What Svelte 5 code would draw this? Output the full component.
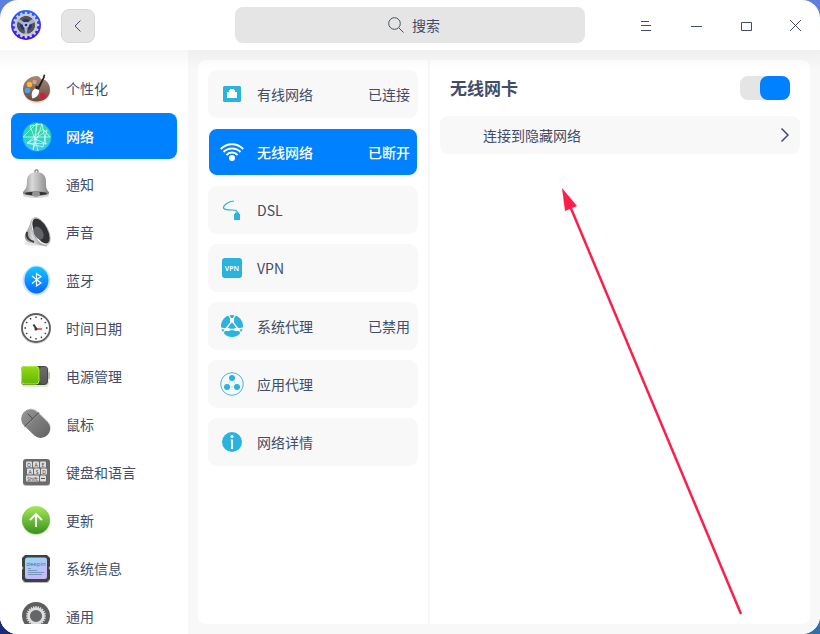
<script lang="ts">
	type Module = { id: string; label: string };
	type Network = { id: string; label: string; status?: string };

	const modules: Module[] = [
		{ id: 'palette', label: '个性化' },
		{ id: 'globe', label: '网络' },
		{ id: 'bell', label: '通知' },
		{ id: 'speaker', label: '声音' },
		{ id: 'bluetooth', label: '蓝牙' },
		{ id: 'clock', label: '时间日期' },
		{ id: 'battery', label: '电源管理' },
		{ id: 'mouse', label: '鼠标' },
		{ id: 'keyboard', label: '键盘和语言' },
		{ id: 'update', label: '更新' },
		{ id: 'chip', label: '系统信息' },
		{ id: 'gear', label: '通用' }
	];

	const networks: Network[] = [
		{ id: 'wired', label: '有线网络', status: '已连接' },
		{ id: 'wifi', label: '无线网络', status: '已断开' },
		{ id: 'dsl', label: 'DSL' },
		{ id: 'vpn', label: 'VPN' },
		{ id: 'proxy', label: '系统代理', status: '已禁用' },
		{ id: 'appproxy', label: '应用代理' },
		{ id: 'info', label: '网络详情' }
	];

	const hours = Array.from({ length: 12 }, (_, i) => i * 30);
	const teeth = Array.from({ length: 16 }, (_, i) => i * 22.5);
	const fineTeeth = Array.from({ length: 24 }, (_, i) => i * 15);
	const thirds = [0, 120, 240];

	let activeModule = $state('globe');
	let activeNetwork = $state('wifi');
	let wirelessOn = $state(true);
	let query = $state('');
</script>

{#snippet moduleIcon(id: string)}
	<svg class="module-icon" viewBox="0 0 32 32" aria-hidden="true">
		{#if id === 'palette'}
			<ellipse cx="17" cy="19" rx="13.5" ry="12.5" fill="#d8673c" opacity=".25" />
			<path d="M17 4C9 4 3 10 3 17c0 7 6 12.500 13.500 12.500C24 29.500 30 25 30 18c0-5-2-8-5-10-2-1.500-3 0-4-1-1-1.500-2-3-4-3z" fill="url(#wood)" />
			<circle cx="9.500" cy="12.500" r="2.700" fill="#f8b83a" />
			<circle cx="14.500" cy="10" r="2.200" fill="#cfa192" />
			<circle cx="7.500" cy="18.500" r="2.800" fill="#4aa3ee" />
			<circle cx="22.500" cy="23.500" r="2.700" fill="#e3123f" />
			<path d="M23.500 4.500l1.300.8L20 15.500l-2-1z" fill="#1c1c1c" />
			<path d="M22.800 5.200l1-3 1.600.8-1.200 3z" fill="#333" />
			<path d="M16 13.500l4 2-1.300 2.500-3.500-1.500z" fill="#2a2523" />
			<path d="M15 16.500l4 1.500c.5 4-2 7.500-6.500 8.500-1.500-3-1-8 2.500-10z" fill="#fff" />
		{:else if id === 'globe'}
			<circle cx="17" cy="17" r="15" fill="#34c7f7" opacity=".3" />
			<circle cx="17" cy="17" r="14" fill="url(#globe)" />
			<path d="M3 17L17 3l-4 27 9-26 4 20-19-1L23 9l7 8H3m7-11l5 13 12-9m-20 13l16 4 4-17M17 3l-2 16 3 12M7 23l8-4 12 5M22 4L10 6" fill="none" stroke="#eafff8" stroke-width=".8" opacity=".85" />
		{:else if id === 'bell'}
			<ellipse cx="16" cy="27.500" rx="13" ry="2.500" fill="#bbb" opacity=".6" />
			<circle cx="16.500" cy="3.500" r="1.600" fill="none" stroke="#777" stroke-width="1.200" />
			<path d="M16.500 4C23 4 26 8 26 13c0 6 0 8 3 11v1.500H3V24c3-3 4-5 4-11 0-5 3-9 9.500-9z" fill="url(#silver)" />
			<ellipse cx="16" cy="25.500" rx="13" ry="2.200" fill="#858585" />
			<ellipse cx="16" cy="25.500" rx="11" ry="1.700" fill="#333" />
			<ellipse cx="16" cy="26" rx="4" ry="2.800" fill="#929292" />
		{:else if id === 'speaker'}
			<ellipse cx="16" cy="27.500" rx="12" ry="2.500" fill="#bbb" opacity=".35" />
			<path d="M12 3L7 15c-4 4-2 10 2 11.500 3 1 9 2 18 4z" fill="url(#silver)" />
			<path d="M7 16c-1 5 2 8.500 7 10" fill="none" stroke="#3b3b3b" stroke-width="2" />
			<ellipse cx="20.500" cy="15.500" rx="7.500" ry="15.200" transform="rotate(-28 20.500 15.500)" fill="#f2f2f2" stroke="#a6a6a6" stroke-width=".8" />
			<ellipse cx="21" cy="15" rx="6.500" ry="13.800" transform="rotate(-28 21 15)" fill="#303235" />
			<ellipse cx="18.500" cy="17" rx="4.500" ry="7" transform="rotate(-28 18.500 17)" fill="#626467" />
		{:else if id === 'bluetooth'}
			<ellipse cx="16.500" cy="16.500" rx="14" ry="15" fill="#2996ff" opacity=".25" />
			<ellipse cx="16.500" cy="16" rx="12" ry="13.500" fill="url(#blue)" />
			<path d="M12 12l9 7-4.500 3V9.500l4.500 3-9 7" fill="none" stroke="#fff" stroke-width="1.200" />
		{:else if id === 'clock'}
			<circle cx="16" cy="17" r="15" fill="#777" opacity=".3" />
			<circle cx="16" cy="16" r="14" fill="#fcfcfc" stroke="#606060" stroke-width="1.800" />
			{#each hours as angle}
				<path d="M16 4.500v1.500" stroke="#333" stroke-width="1.300" transform="rotate({angle} 16 16)" />
			{/each}
			<path d="M13.500 12.500l2.500 4" stroke="#3b4143" stroke-width="2" />
			<path d="M16 17h6" stroke="#ff454b" stroke-width="1.700" />
			<circle cx="16" cy="17" r="1.500" fill="#33383a" />
		{:else if id === 'battery'}
			<rect x="1" y="7" width="28" height="20" rx="4" fill="#8bcb20" opacity=".3" />
			<rect x="27" y="12" width="3" height="7" rx="1" fill="#bbb" />
			<rect x="1" y="6" width="27" height="19" rx="4" fill="#454647" />
			<rect x="1.500" y="6.500" width="17.500" height="17.500" rx="3" fill="url(#green)" stroke="#b7ed42" />
			<rect x="20" y="7" width="7" height="17" rx="2" fill="url(#gray)" opacity=".5" />
		{:else if id === 'mouse'}
			<rect x="6.500" y="-.5" width="19" height="33" rx="9.500" fill="#bbb" opacity=".5" transform="rotate(-46 15 15)" />
			<rect x="6.500" y="-1" width="19" height="33" rx="9.500" fill="url(#gray)" transform="rotate(-46 16 16)" />
			<path d="M4.500 18.700L19 4.500M7.700 5.500l5 5.500" fill="none" stroke="#484848" stroke-width="1" />
			<path d="M5.500 19L20 5" stroke="#a8a8a8" stroke-width=".5" />
		{:else if id === 'keyboard'}
			<rect x="3" y="4" width="27" height="26" rx="3" fill="#bbb" />
			<rect x="3" y="3" width="27" height="26" rx="3" fill="#6b6b6c" />
			{#each ['Q', 'A', 'E', 'A', 'S', 'D'] as key, i}
				<rect x={6 + (i % 3) * 7 + (i > 2 ? 1 : 0)} y={i > 2 ? 12.5 : 5.5} width="6" height="6" rx="1" fill="#dedede" />
				<text x={9 + (i % 3) * 7 + (i > 2 ? 1 : 0)} y={i > 2 ? 17.5 : 10.5} class="keycap">{key}</text>
			{/each}
			<rect x="6" y="19.500" width="13" height="6" rx="1" fill="#dedede" />
			<text x="12.500" y="24.500" class="keycap">Shift</text>
			<rect x="20" y="19.500" width="6" height="6" rx="1" fill="#dedede" />
			<path d="M21 22.500h4" stroke="#555" />
		{:else if id === 'update'}
			<circle cx="16" cy="17" r="14" fill="#92d565" opacity=".5" />
			<circle cx="16" cy="16" r="14" fill="url(#leaf)" />
			<path d="M16 23V10m-6 6l6-6 6 6" fill="none" stroke="#fff" stroke-width="1.800" />
		{:else if id === 'chip'}
			<rect x="2" y="4" width="28" height="27" rx="4" fill="#bbb" />
			<path d="M5 3h22l3 3v8l-1.500 2 1.500 2v9l-3 3H5l-3-3v-9l1.500-2L2 14V6z" fill="#3f4042" />
			<rect x="5" y="5.500" width="22" height="21.500" rx="2.500" fill="url(#screen)" />
			<text x="16" y="13.500" class="brand">deepin</text>
			<path d="M8 16.500h3M8 18.500h9M8 20.500h16M8 22.500h14" stroke="#698ba9" stroke-width=".8" />
		{:else}
			<circle cx="16" cy="16" r="14" fill="#5d5e5f" />
			{#each fineTeeth as angle}
				<path d="M15.400 6h1.200l.4 3h-2z" fill="#dedede" transform="rotate({angle} 16 16)" />
			{/each}
			<circle cx="16" cy="16" r="7.300" fill="#656667" stroke="#dedede" stroke-width="2.500" />
		{/if}
	</svg>
{/snippet}

{#snippet networkIcon(id: string)}
	<svg class="network-icon" viewBox="0 0 24 24" fill="#2ab3dd" aria-hidden="true">
		{#if id === 'wired'}
			<rect x="3" y="4" width="18" height="16" rx="1.500" />
			<path d="M7 16h10v-6h-2V8h-1V7h-4v1H9v2H7z" fill="#fff" />
		{:else if id === 'wifi'}
			<g fill="none" stroke="currentColor" stroke-width="2">
				<path d="M.8 9c6-6.500 16.400-6.500 22.400 0M3.500 12c4.500-4.800 12.500-4.800 17 0M6.500 15c3-3.300 8-3.300 11 0" />
			</g>
			<circle cx="12" cy="18" r="3" fill="currentColor" />
		{:else if id === 'dsl'}
			<path d="M14 3C8 3.500 4 7 3.500 9c-.5 3 5 3 9 3 4 .2 5.500 1 5 4" fill="none" stroke="#2ab3dd" stroke-width="1.200" />
			<path d="M15 14.500h4V16h1v6h-6v-6h1z" />
		{:else if id === 'vpn'}
			<rect x="2" y="2" width="20" height="20" rx="3" />
			<text x="12" y="14.500" class="vpn">VPN</text>
		{:else if id === 'proxy'}
			<circle cx="12" cy="12" r="11" />
			<path d="M12 7L5.500 15.500M12 7l6.500 8.500M7 15.500h10M0 14l5 1M24 14l-5 1M5 16l-2 3M19 16l2 3M11 5L8 0M13 5l3-5" fill="none" stroke="#f8f8f8" stroke-width="1.300" />
			<path d="M10 4h4v5h-4zM4.500 14h5v3h-5zM14.500 14h5v3h-5z" fill="#fff" />
			<path d="M12 9l-2 3.500h4z" />
		{:else if id === 'appproxy'}
			<circle cx="12" cy="12" r="11.300" fill="none" stroke="#2ab3dd" stroke-width=".9" />
			<path d="M12 6L7 15h10z" fill="none" stroke="#a8ddea" stroke-width=".7" />
			<circle cx="12" cy="6" r="3" />
			<circle cx="7" cy="15" r="3" />
			<circle cx="17" cy="15" r="3" />
		{:else}
			<circle cx="12" cy="12" r="10" />
			<circle cx="12" cy="6.500" r="1.500" fill="#fff" />
			<path d="M10.500 9.500H13V19h-2v-8.500h-.5z" fill="#fff" />
		{/if}
	</svg>
{/snippet}

<div class="desktop">
	<svg class="defs" aria-hidden="true">
		<defs>
			<linearGradient id="wood" x2="0" y2="1"><stop stop-color="#a98976" /><stop offset="1" stop-color="#684b40" /></linearGradient>
			<linearGradient id="globe" x2="0" y2="1"><stop stop-color="#25dc96" /><stop offset="1" stop-color="#3cc8ec" /></linearGradient>
			<linearGradient id="silver"><stop stop-color="#858585" /><stop offset=".35" stop-color="#dadada" /><stop offset="1" stop-color="#838383" /></linearGradient>
			<linearGradient id="blue" x2="0" y2="1"><stop stop-color="#17c4ff" /><stop offset="1" stop-color="#0866ff" /></linearGradient>
			<linearGradient id="green" x2="0" y2="1"><stop stop-color="#93da14" /><stop offset="1" stop-color="#62b605" /></linearGradient>
			<linearGradient id="gray" x2="0" y2="1"><stop stop-color="#929292" /><stop offset="1" stop-color="#676767" /></linearGradient>
			<linearGradient id="leaf" x2="0" y2="1"><stop stop-color="#a6e957" /><stop offset="1" stop-color="#38911f" /></linearGradient>
			<linearGradient id="screen" x2=".5" y2="1"><stop stop-color="#91dbf7" /><stop offset="1" stop-color="#c9b6fb" /></linearGradient>
			<linearGradient id="logo" x2="0" y2="1"><stop stop-color="#2867ff" /><stop offset="1" stop-color="#4b0ddb" /></linearGradient>
		</defs>
	</svg>

	<div class="window">
		<header>
			<div class="leading">
				<svg class="logo" viewBox="0 0 32 32" aria-hidden="true">
					<circle cx="16" cy="16" r="15" fill="url(#logo)" />
					{#each teeth as angle}
						<path d="M15 2.800h2l.6 3h-3.200z" fill="#ccd2e6" transform="rotate({angle} 16 16)" />
					{/each}
					<circle cx="16" cy="16" r="10" fill="#27307c" stroke="#c3c9db" stroke-width="2.500" />
					{#each thirds as angle}
						<g transform="rotate({angle} 16 16)">
							<path d="M10.500 11.500c3-4 8-4 11 0" fill="none" stroke="#51554e" stroke-width="3" />
							<path d="M14.800 16L14 25h4l-.8-9z" fill="#aab1c4" />
						</g>
					{/each}
					<circle cx="16" cy="16" r="3" fill="#bcc2d3" />
					<circle cx="16" cy="16" r="1.300" fill="#202768" />
				</svg>
				<button class="back" aria-label="返回">
					<svg viewBox="0 0 16 16"><path d="M10.500 2.500L5 8l5.500 5.500" /></svg>
				</button>
			</div>

			<label class="search">
				<svg viewBox="0 0 16 16" aria-hidden="true"><circle cx="6.500" cy="6.500" r="5.800" /><path d="M11 11l4.500 4.500" /></svg>
				<input type="text" placeholder="搜索" aria-label="搜索" bind:value={query} />
			</label>

			<div class="controls">
				<button aria-label="菜单"><svg viewBox="0 0 14 14"><path d="M3 3.500h8M3 7.500h10M3 12.500h10" /></svg></button>
				<button aria-label="最小化"><svg viewBox="0 0 14 14"><path d="M3 8.500h11" /></svg></button>
				<button aria-label="最大化"><svg viewBox="0 0 14 14"><path d="M3.500 4.500h10v8h-10z" /></svg></button>
				<button aria-label="关闭"><svg viewBox="0 0 14 14"><path d="M2 2l11 11M13 2L2 13" /></svg></button>
			</div>
		</header>

		<div class="body">
			<nav class="sidebar">
				{#each modules as item (item.id)}
					<button class="module" class:active={activeModule === item.id} onclick={() => (activeModule = item.id)}>
						{@render moduleIcon(item.id)}
						<span>{item.label}</span>
					</button>
				{/each}
			</nav>

			<main>
				<div class="networks">
					{#each networks as item (item.id)}
						<button class="network" class:active={activeNetwork === item.id} onclick={() => (activeNetwork = item.id)}>
							{@render networkIcon(item.id)}
							<span>{item.label}</span>
							{#if item.status}
								<span class="status">{item.status}</span>
							{/if}
						</button>
					{/each}
				</div>

				<section class="detail">
					<div class="adapter">
						<label for="wireless">无线网卡</label>
						<input id="wireless" class="switch" type="checkbox" role="switch" bind:checked={wirelessOn} />
					</div>
					<button class="hidden-network">
						<span>连接到隐藏网络</span>
						<svg viewBox="0 0 10 16" aria-hidden="true"><path d="M1.500 1.500L8 8l-6.500 6.500" /></svg>
					</button>
					<svg class="pointer" viewBox="0 0 182 430" aria-hidden="true">
						<path d="M8 18L179 426" stroke="#fd1f4b" stroke-width="2.500" />
						<path d="M0 0l15 18-12 5z" fill="#fd1f4b" />
					</svg>
				</section>
			</main>
		</div>
	</div>
</div>

<style>
	:global(body) {
		margin: 0;
		font-family: "Noto Sans CJK SC", "Noto Sans", sans-serif;
		font-size: 14px;
		line-height: 20px;
		color: #414d68;
	}

	.desktop {
		height: 100vh;
		background: linear-gradient(90deg, #1a2b77, #2d70ad) bottom / 100% 50% no-repeat, #5d80dc;
	}

	.defs {
		position: absolute;
		width: 0;
		height: 0;
	}

	.window {
		display: flex;
		flex-direction: column;
		height: 100%;
		overflow: hidden;
		border-radius: 18px;
		background: #fff;
	}

	button,
	input {
		font: inherit;
		color: inherit;
	}

	button {
		padding: 0;
		border: 0;
		background: none;
		text-align: left;
	}

	header {
		display: grid;
		grid-template-columns: 1fr minmax(160px, 350px) 1fr;
		align-items: center;
		flex: none;
		height: 50px;
	}

	.leading {
		display: flex;
		align-items: center;
		gap: 19px;
		padding-left: 10px;
	}

	.logo {
		width: 32px;
		height: 32px;
	}

	.back {
		display: grid;
		place-items: center;
		width: 34px;
		height: 34px;
		margin-top: 2px;
		border: 1px solid #d8d8d8;
		border-radius: 8px;
		background: #e5e5e5;
	}

	.back path,
	.controls path,
	.search path,
	.search circle,
	.hidden-network path {
		stroke: #414d68;
		fill: none;
	}

	.back svg,
	.search svg {
		width: 16px;
		height: 16px;
	}

	.search {
		display: flex;
		align-items: center;
		justify-content: center;
		gap: 8px;
		height: 36px;
		padding-left: 8px;
		border-radius: 8px;
		background: #e5e5e5;
		box-sizing: border-box;
	}

	.search input {
		field-sizing: content;
		padding: 0;
		border: 0;
		outline: 0;
		background: none;
	}

	.search input::placeholder {
		color: #414d68;
		opacity: 1;
	}

	.controls {
		display: flex;
		justify-content: flex-end;
	}

	.controls button {
		display: grid;
		place-items: center;
		width: 50px;
		height: 50px;
	}

	.controls svg {
		width: 14px;
		height: 14px;
	}

	.body {
		position: relative;
		display: flex;
		flex: 1;
		min-height: 0;
		background: #f8f8f8;
	}

	/* soft shade below the title bar */
	.body::before {
		content: "";
		position: absolute;
		inset: 0 0 auto;
		height: 20px;
		background: linear-gradient(rgba(0, 0, 0, 0.035), transparent);
		pointer-events: none;
	}

	.sidebar {
		display: flex;
		flex-direction: column;
		gap: 2px;
		width: 188px;
		padding: 15px 11px 0;
		border-bottom: 10px solid #fff;
		box-sizing: border-box;
		overflow: hidden;
		background: #fff;
	}

	.module {
		display: flex;
		align-items: center;
		flex: none;
		gap: 14px;
		height: 46px;
		padding-left: 9px;
		border-radius: 8px;
	}

	.active {
		background: #0081ff;
		color: #fff;
		font-weight: 500;
	}

	.module-icon {
		width: 32px;
		height: 32px;
	}

	.keycap,
	.brand,
	.vpn {
		font-family: "Noto Sans", sans-serif;
		text-anchor: middle;
	}

	.keycap {
		font-size: 5px;
		fill: #444;
	}

	.brand {
		font-size: 6px;
		fill: #527b9b;
	}

	.vpn {
		font-size: 7px;
		font-weight: 600;
		fill: #fff;
	}

	main {
		display: flex;
		flex: 1;
		min-width: 0;
		margin: 10px;
		border-radius: 8px;
		background: #fff;
	}

	.networks {
		display: flex;
		flex-direction: column;
		gap: 10px;
		width: 232px;
		padding: 10px;
		border-right: 2px solid #f7f7f7;
		box-sizing: border-box;
	}

	.network {
		display: flex;
		align-items: center;
		gap: 13px;
		height: 48px;
		padding: 0 7px 0 11px;
		border: 1px solid #f8f8f8;
		border-radius: 9px;
		background: #f8f8f8;
	}

	.network.active {
		border-color: #fff;
		background: #0081ff;
	}

	.network-icon {
		width: 24px;
		height: 24px;
	}

	.status {
		margin-left: auto;
	}

	.detail {
		position: relative;
		flex: 1;
		min-width: 0;
		padding: 10px;
	}

	.adapter {
		display: flex;
		align-items: center;
		justify-content: space-between;
		height: 36px;
		padding: 0 10px;
		margin-bottom: 10px;
		font-size: 17px;
		font-weight: 700;
	}

	.switch {
		appearance: none;
		width: 50px;
		height: 24px;
		margin: 0;
		border-radius: 8px;
		background: #e5e5e5;
	}

	.switch::before {
		content: "";
		display: block;
		width: 30px;
		height: 24px;
		border-radius: 8px;
		background: #b5b5b5;
	}

	.switch:checked::before {
		margin-left: 20px;
		background: #0081ff;
	}

	.hidden-network {
		display: flex;
		align-items: center;
		justify-content: space-between;
		width: 100%;
		height: 38px;
		padding: 0 10px 0 43px;
		border-radius: 8px;
		background: #f8f8f8;
	}

	.hidden-network svg {
		width: 10px;
		height: 16px;
	}

	.hidden-network path {
		stroke-width: 1.5px;
	}

	.pointer {
		position: absolute;
		top: 128px;
		left: 132px;
		width: 182px;
		height: 430px;
		pointer-events: none;
	}
</style>
